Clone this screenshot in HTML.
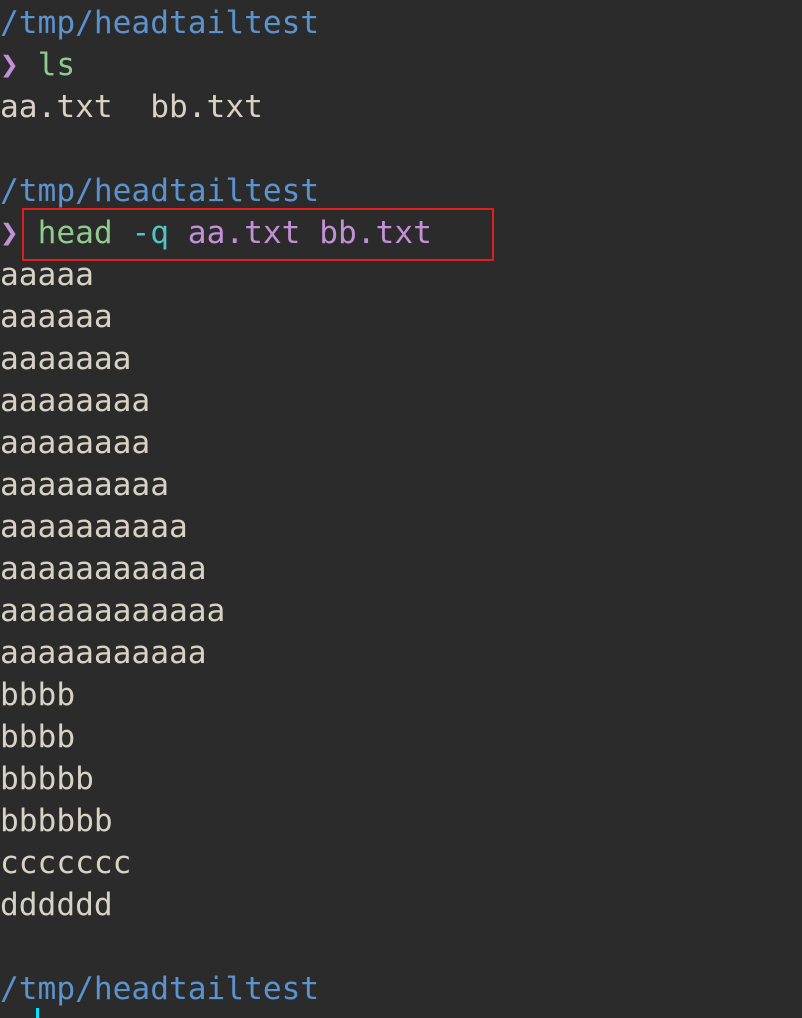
<!DOCTYPE html>
<html><head><meta charset="utf-8"><style>
html,body{margin:0;padding:0;background:#2b2b2b;width:802px;height:1018px;overflow:hidden}
pre{margin:0;padding-top:2px;font-family:"DejaVu Sans Mono","Liberation Mono",monospace;font-size:31.2px;line-height:42px;color:#d8d2c4;white-space:pre}
.b{color:#5b93cf}.g{color:#8fcc8c}.p{color:#c38fd6}.c{color:#4ec6c6}
.box{position:absolute;left:22px;top:208px;width:468px;height:49px;border:2px solid #e01e1e}
.cur{position:absolute;left:36px;top:1008px;width:3px;height:10px;background:#00e5ff}
</style></head><body>
<pre><span class="b">/tmp/headtailtest</span>
<span class="p">❯</span> <span class="g">ls</span>
aa.txt  bb.txt

<span class="b">/tmp/headtailtest</span>
<span class="p">❯</span> <span class="g">head</span> <span class="c">-q</span> <span class="p">aa.txt bb.txt</span>
aaaaa
aaaaaa
aaaaaaa
aaaaaaaa
aaaaaaaa
aaaaaaaaa
aaaaaaaaaa
aaaaaaaaaaa
aaaaaaaaaaaa
aaaaaaaaaaa
bbbb
bbbb
bbbbb
bbbbbb
ccccccc
dddddd

<span class="b">/tmp/headtailtest</span>
<span class="p">❯</span></pre>
<div class="box"></div>
<div class="cur"></div>
</body></html>
